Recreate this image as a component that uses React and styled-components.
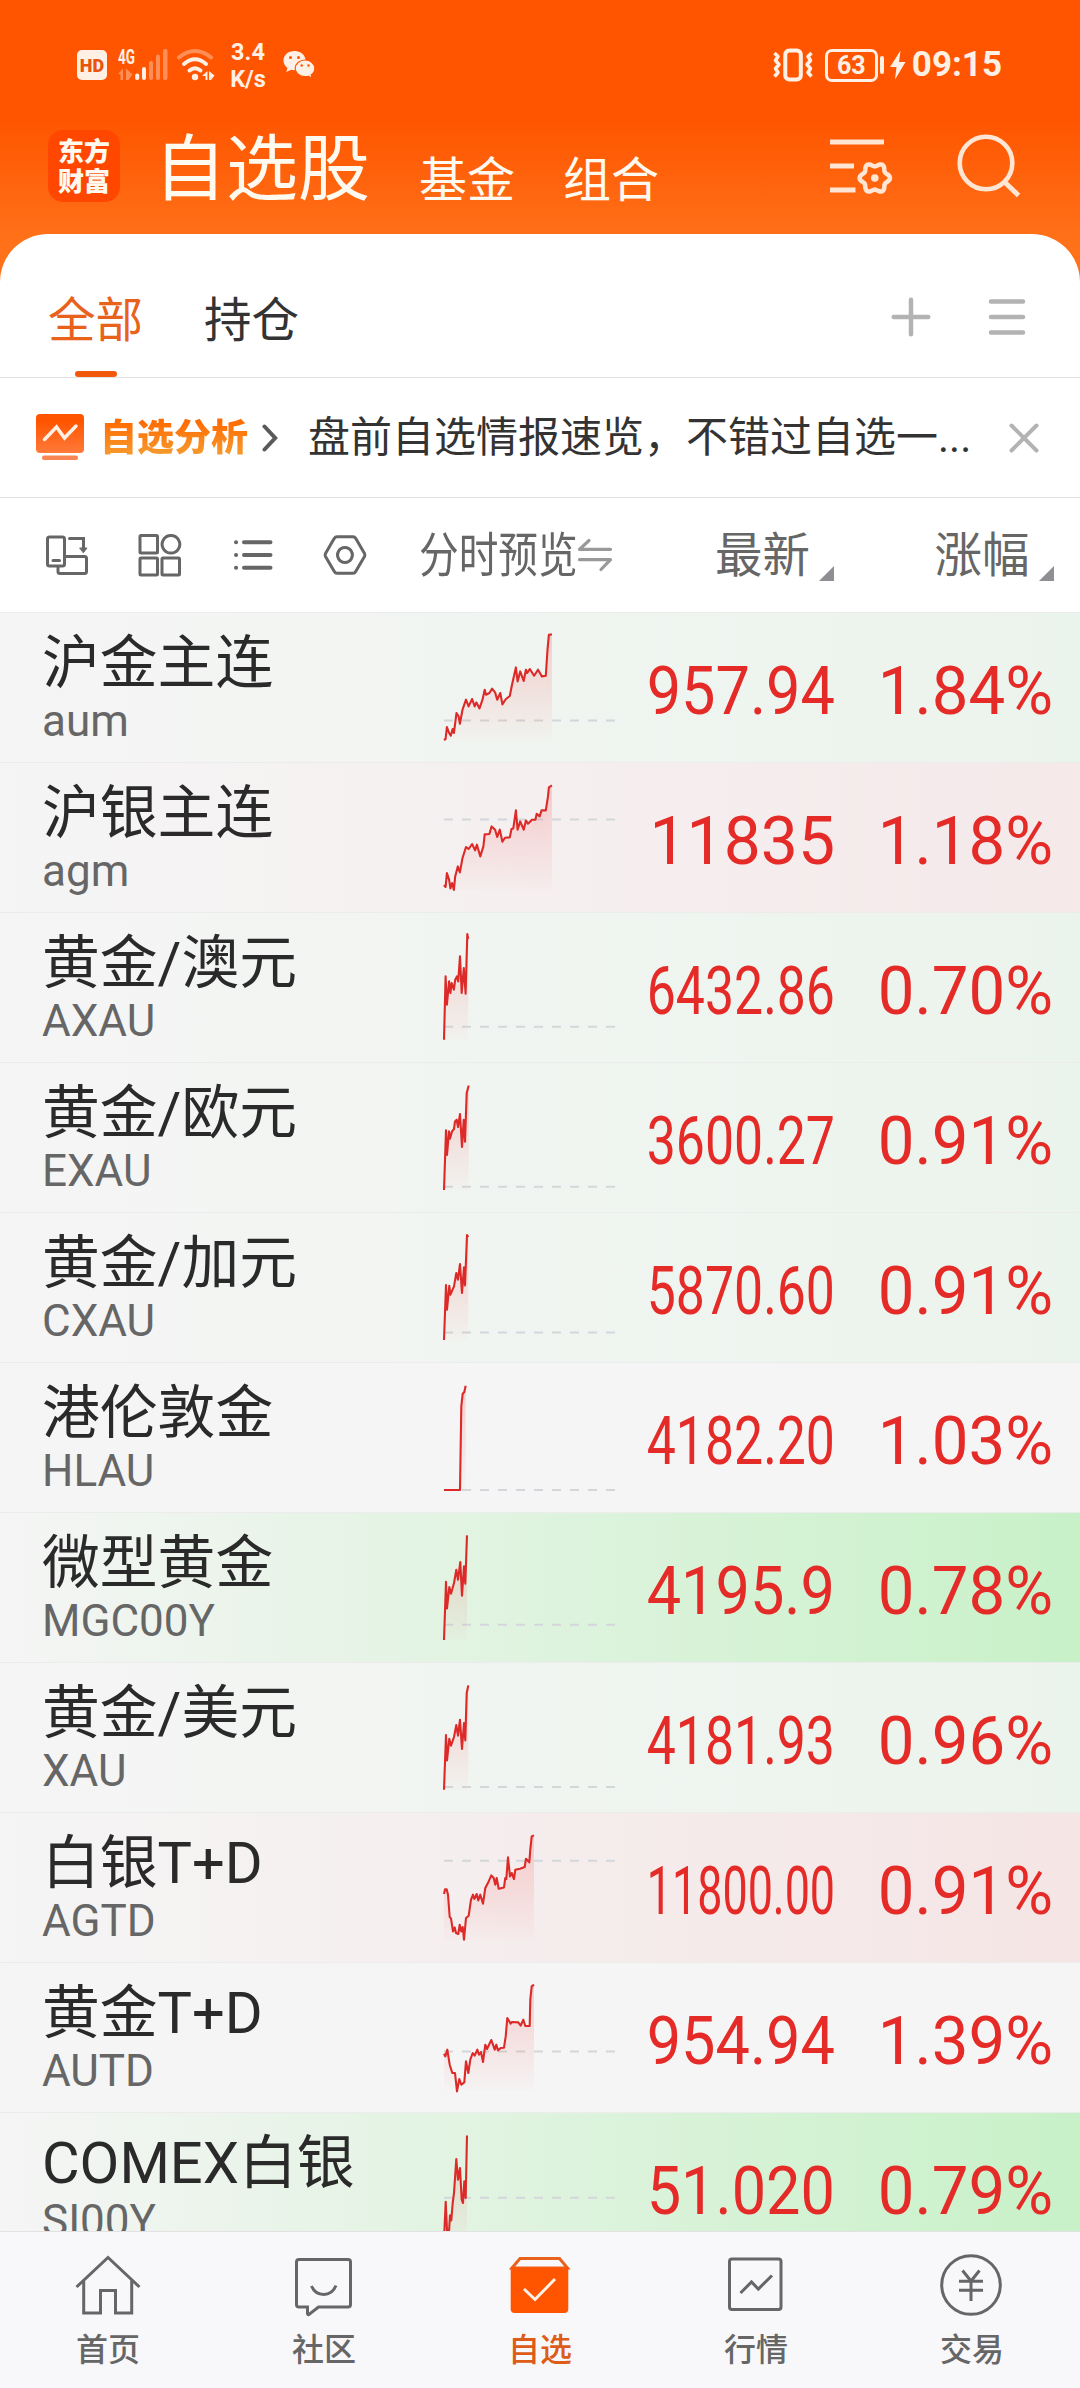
import React from "react";
import styled, { createGlobalStyle } from "styled-components";

const quotes = [
  {
    name: "沪金主连",
    code: "aum",
    price: "957.94",
    change: "1.84%",
    tint: "#ebf4ec",
    base: 108.4,
    line: "0,128 1.6,127 2.9,115 5.1,121 6.8,123.7 8.6,117 9.9,121 12.5,101 14.6,104.4 15.9,111.7 18.5,97.7 22,87.7 24.6,94.4 28.1,87 30.7,94.4 32.4,90.4 35.5,96.4 38.5,87.7 40.7,77.7 42,82.7 45.4,81 48,76.7 51.1,80.4 53.2,87.7 56.3,81 58.4,92.4 61.9,87 65.8,84 68,72.7 71.9,55.4 73.6,69.4 76.2,59.4 79.7,69 81.9,57.7 83.2,61 85.8,57 90.1,63.7 94,57.7 97.9,64.4 101.8,63.7 103.5,37.7 104.9,22.7 107.9,22.4",
  },
  {
    name: "沪银主连",
    code: "agm",
    price: "11835",
    change: "1.18%",
    tint: "#f5e9ea",
    base: 57.4,
    line: "0,123 1.6,125 2.9,111 5.1,117.7 6.4,126.4 8.1,121 9.9,128 11.2,114.4 13.8,104.4 15.9,110.4 18.5,96 22,85 24.6,87 28.1,82 31.1,88.4 32.9,82.7 36.3,94.4 39.4,84.4 40.7,72.4 45.4,72 47.6,64.4 51.1,67.7 53.2,75 55.8,67.7 58.4,79.7 61,75.7 65.8,75.4 67.5,67 69.3,66.4 71.9,48.4 73.6,67.7 76.2,59.4 79.7,67.7 81.9,58.4 84,61.7 87.9,57.7 91.4,57.7 92.7,51.7 95.7,54.4 97.5,48.4 101.8,48.4 104,34.4 104.9,25.4 107.9,23.4",
  },
  {
    name: "黄金/澳元",
    code: "AXAU",
    price: "6432.86",
    change: "0.70%",
    tint: "#ebf4ec",
    base: 114.7,
    line: "0,127.7 1.6,64.4 2.9,92.7 5.1,69.4 6.4,81 7.7,71 9.9,77.7 11.2,67.7 12.9,64.4 14.2,69.4 16,44.4 17.7,81 19.8,56 21.6,81.7 23.3,22 24.2,27",
  },
  {
    name: "黄金/欧元",
    code: "EXAU",
    price: "3600.27",
    change: "0.91%",
    tint: "#ebf4ec",
    base: 124.7,
    line: "0,128 2,68.4 3,93 5,69.4 6,76.7 8,69.4 10,67 11,59.4 12.7,57.7 14,65 16,52 18,85 19.7,57.7 21,79.7 22.7,31 24.7,23.4",
  },
  {
    name: "黄金/加元",
    code: "CXAU",
    price: "5870.60",
    change: "0.91%",
    tint: "#ebf4ec",
    base: 120.4,
    line: "0,128 2,73 3,97.7 5.3,73.7 6.3,82.7 10,74.4 12.3,61 14,67.7 16,52 18,81 20,55.4 21,73.4 23,23 24.3,25",
  },
  {
    name: "港伦敦金",
    code: "HLAU",
    price: "4182.20",
    change: "1.03%",
    tint: "#f5f5f5",
    base: 128,
    line: "0,128 16,128 17.3,44.4 18.7,31.7 20.3,30 21.7,23.7",
  },
  {
    name: "微型黄金",
    code: "MGC00Y",
    price: "4195.9",
    change: "0.78%",
    tint: "#c8f1c8",
    base: 112.7,
    line: "0,128 2,69.7 3,96.4 5.3,75 7,81.7 10,71 12.3,57.7 14,67.7 16.3,50 18,83.7 20,54.4 21.3,71.7 23,23.4",
  },
  {
    name: "黄金/美元",
    code: "XAU",
    price: "4181.93",
    change: "0.96%",
    tint: "#ebf4ec",
    base: 125,
    line: "0,127.7 2,73 3,98.4 5.3,76.7 7,83.7 10,75 12.3,63 14,73.7 16,57.7 18,87 20,61 21.3,78.4 22.7,31 24.3,23.4",
  },
  {
    name: "白银T+D",
    code: "AGTD",
    price: "11800.00",
    change: "0.91%",
    tint: "#f5e5e5",
    base: 48.7,
    line: "0,82 1,77.4 2.7,77.4 4,82.7 5.7,105 7,106.4 9,119.4 10.7,115.4 12,121 14.3,122 15.7,112.7 17.3,119.4 18.7,115 20,127.7 22,106 24.7,103.7 27,87.7 29,82.7 30.3,87 32.7,82 34.3,88.4 36.3,82.7 39,91.7 41.3,76 44.7,69.4 47.3,63.4 49.7,66 51.3,72.7 52.7,66 54.7,76.7 60,75.4 61.3,66 62.3,67 64,45.4 66,64.4 67.7,61 70,67 71.3,57.7 76,56.7 80.7,55 82,46.7 85.3,50.4 86.3,37.7 87.7,24.4 90,23.4",
  },
  {
    name: "黄金T+D",
    code: "AUTD",
    price: "954.94",
    change: "1.39%",
    tint: "#f5f5f5",
    base: 89.4,
    line: "0,91.7 1.3,94.4 3.3,87.7 5.7,102.7 8.3,111 11,111 13,129.4 15.3,117 17.3,122.7 20.3,120.4 22,99.4 24.3,111 26.3,97.7 28.7,91 30.7,93.7 33.3,87.7 35,92.7 37,90 39,100 41.3,82.7 43,87 47.3,78 49,82.7 50.7,87.7 52.3,82.7 54,88.4 56.7,86 60,85.7 61.7,74.4 63.3,56 66.7,61.7 68,60 74.3,60.4 76.7,63.7 79.3,57.7 81.3,64 85.7,64 86.3,37.7 87.7,24.4 90,22.7",
  },
  {
    name: "COMEX白银",
    code: "SI00Y",
    price: "51.020",
    change: "0.79%",
    tint: "#c8f1c8",
    base: 85.7,
    line: "0,128 1.7,89.7 3,118 4.7,125 6,103.4 7.3,108.4 8.7,91 10,81 12.3,47 14,67.7 16,56 17.7,87.7 19,91 20.3,69.4 21.7,86 23,23.4",
  },
];

// prices share one column width, longer ones get narrower glyphs
const squeezeOf = (price) => {
  const dots = price.split(".").length - 1;
  const natural = ((price.length - dots) * 0.5615 + dots * 0.263) * 66;
  return Math.min(1, 188 / natural);
};

const gearPath = () => {
  const points = [];
  for (let i = 0; i < 72; i++) {
    const a = (i / 72) * Math.PI * 2;
    const r = 13.4 + 1.8 * Math.cos(6 * a);
    points.push(
      `${(47.8 + r * Math.cos(a)).toFixed(2)},${(44 + r * Math.sin(a)).toFixed(2)}`
    );
  }
  return `M${points.join("L")}Z`;
};

const Signal = () => (
  <SignalSvg width="50" height="32" viewBox="0 0 50 32">
    <text
      x="0"
      y="14.5"
      fontFamily="Roboto, sans-serif"
      fontSize="19.5"
      fontWeight="700"
      textLength="17"
      lengthAdjust="spacingAndGlyphs"
      fill="#fff0e6"
    >
      4G
    </text>
    <g fill="#ff8f57">
      <path d="M0 25 5 19.5V31H2.500V25ZM8 19.5 14.5 25.5 10.500 31H8Z" />
      <rect x="31" y="12" width="4" height="19" rx="2" />
      <rect x="38" y="5.500" width="4" height="25.500" rx="2" />
      <rect x="45" y="0" width="4.500" height="31" rx="2" />
    </g>
    <g fill="#fff0e6">
      <rect x="17.200" y="24.500" width="4" height="6.500" rx="1.800" />
      <rect x="24" y="18" width="4" height="13" rx="2" />
    </g>
  </SignalSvg>
);

const Wifi = () => (
  <svg width="38" height="32" viewBox="0 0 38 32" fill="none" strokeLinecap="round" strokeWidth="4">
    <path d="M2 8.500Q18 -4.500 34 8.500" stroke="#ff8f57" />
    <path d="M7 15Q18 5.500 29 15M12.500 21.500Q18 17 23.500 21.500" stroke="#fff0e6" />
    <circle cx="18" cy="28" r="3.200" fill="#fff0e6" />
    <path d="M25 27 30.500 22V31H28.500V27ZM32 22 37.500 26.500 34 31H32Z" fill="#fff0e6" />
  </svg>
);

const Wechat = () => (
  <svg width="34" height="30" viewBox="0 0 34 30">
    <path
      d="M11.500 1C5 1 .500 5.200.500 10.500c0 3.200 1.600 5.700 4 7.500l-1.200 4 4.700-2.300c1.200.300 2.300.500 3.500.500 6.200 0 11-4.200 11-9.700S17.700 1 11.500 1Z"
      fill="#fff0e6"
    />
    <path
      d="M22 10c-5.500 0-9.800 3.700-9.800 8.400s4.300 8.300 9.800 8.300c1.200 0 2.300-.100 3.300-.500l3.800 2-.900-3.400c2.200-1.500 3.600-3.700 3.600-6.400 0-4.700-4.300-8.400-9.800-8.400Z"
      fill="#fff0e6"
      stroke="#ff5500"
      strokeWidth="1.200"
    />
    <g fill="#ff5500">
      <circle cx="7.500" cy="7.500" r="1.500" />
      <circle cx="15.500" cy="7.500" r="1.500" />
      <circle cx="18.700" cy="15.500" r="1.200" />
      <circle cx="25.500" cy="15.500" r="1.200" />
    </g>
  </svg>
);

const Vibrate = () => (
  <svg width="40" height="34" viewBox="0 0 40 34" fill="none" stroke="#fff0e6">
    <rect x="12.300" y="2.500" width="15.500" height="29" rx="4" strokeWidth="4" />
    <path
      d="M1.500 5 5 8.500 2.500 12.500 6 16.500 2.500 20.500 5 24.500 1.500 28.500M38.500 5 35 8.500 37.500 12.500 34 16.500 37.500 20.500 35 24.500 38.500 28.500"
      strokeWidth="3.500"
      strokeLinejoin="round"
    />
  </svg>
);

const Bolt = () => (
  <svg width="16" height="30" viewBox="0 0 16 30">
    <path d="M10.500.500 0 17H6.500L5 29.500 15.500 12H9Z" fill="#fff0e6" />
  </svg>
);

const FilterIcon = () => (
  <svg width="68" height="66" viewBox="0 0 68 66" fill="none" stroke="#ffe6d4" strokeWidth="5">
    <path d="M3 8H57M3 32H27M3 56H28.500" />
    <path d={gearPath()} strokeWidth="4.500" />
    <circle cx="47.800" cy="44" r="3.800" fill="#ffe6d4" stroke="none" />
  </svg>
);

const SearchIcon = () => (
  <svg width="68" height="68" viewBox="0 0 68 68" fill="none" stroke="#ffe6d4" strokeWidth="4.600">
    <circle cx="31" cy="33" r="26.300" />
    <path d="M49.500 52 63.500 65.500" strokeWidth="5" />
  </svg>
);

const PlusIcon = () => (
  <svg width="40" height="40" viewBox="0 0 40 40" stroke="#b3b3b3" strokeWidth="4.500" strokeLinecap="round">
    <path d="M2.700 20H37.300M20 2.700V37.300" />
  </svg>
);

const MenuIcon = () => (
  <svg width="40" height="40" viewBox="0 0 40 40" stroke="#b3b3b3" strokeWidth="4.500" strokeLinecap="round">
    <path d="M4 4.500H36M4 20H36M4 35.500H36" />
  </svg>
);

const AnalysisIcon = () => (
  <svg width="48" height="48" viewBox="0 0 48 48" fill="none">
    <defs>
      <linearGradient id="screen" x1="0" y1="0" x2="0" y2="1">
        <stop offset="0.200" stopColor="#ff5500" />
        <stop offset="1" stopColor="#ff7a3a" />
      </linearGradient>
    </defs>
    <rect width="48" height="39" rx="4" fill="url(#screen)" />
    <rect x="6" y="41.500" width="36" height="4.500" rx="2" fill="#f98552" />
    <path d="M8.500 25.500 20.500 13 28.500 24 40 12" stroke="#fff0e6" strokeWidth="3.500" strokeLinecap="round" />
  </svg>
);

const Chevron = () => (
  <svg width="16" height="28" viewBox="0 0 16 28" fill="none" stroke="#5a5a5a" strokeWidth="4" strokeLinecap="round">
    <path d="M2.500 2.500 13.200 14 2.500 25.500" />
  </svg>
);

const CloseIcon = () => (
  <svg width="32" height="32" viewBox="0 0 32 32" stroke="#b3b3b3" strokeWidth="4" strokeLinecap="round">
    <path d="M3.500 3.500 28.500 28.500M28.500 3.500 3.500 28.500" />
  </svg>
);

const toolIcons = [
  <g key="rotate">
    <path d="M4.500 4H17.500Q19.500 4 19.500 6V31Q19.500 33 17.500 33H4.500Q2.500 33 2.500 31V6Q2.500 4 4.500 4ZM8 27.500H14.500M24.500 5.500H38.500V15M20 23.500H39.500Q41.500 23.500 41.500 25.500V38.500Q41.500 40.500 39.500 40.500H15Q13 40.500 13 38.500V34" />
    <path d="M35 15H42L38.500 19.500Z" fill="#666" strokeWidth="1" />
  </g>,
  <path
    key="grid"
    d="M3 2.500H18.500Q19.500 2.500 19.500 3.500V19Q19.500 20 18.500 20H3Q2 20 2 19V3.500Q2 2.500 3 2.500ZM33 2.500A8.800 8.800 0 1 1 32.900 2.500ZM3 25H18.500Q19.500 25 19.500 26V41Q19.500 42 18.500 42H3Q2 42 2 41V26Q2 25 3 25ZM25 25H40.500Q41.500 25 41.500 26V41Q41.500 42 40.500 42H25Q24 42 24 41V26Q24 25 25 25Z"
  />,
  <path
    key="list"
    d="M5 9.300H5.100M13 9.300H39.500M5 22H5.100M13 22H39.500M5 34.700H5.100M13 34.700H39.500"
    strokeWidth="4"
  />,
  <path
    key="hexagon"
    d="M14 3.800H30Q31.700 3.800 32.700 5.300L41.500 20.500Q42.300 22 41.500 23.500L32.700 38.500Q31.700 40.300 30 40.300H14Q12.300 40.300 11.300 38.500L2.500 23.500Q1.700 22 2.500 20.500L11.300 5.300Q12.300 3.800 14 3.800ZM22 14.600A7.400 7.400 0 1 1 21.900 14.600Z"
  />,
];

const SwapIcon = () => (
  <svg width="36" height="34" viewBox="0 0 36 34" fill="none" stroke="#999" strokeWidth="3.200" strokeLinecap="round" strokeLinejoin="round">
    <path d="M33.500 11.300H2.500L12 2.500M2.500 21.700H33.500L24 31.500" />
  </svg>
);

const tabs = [
  {
    label: "首页",
    icon: (
      <path d="M4.500 35 36 5.500 67.500 35M11.700 28.500V61H28.500V38.500H43.500V61H59.700V28.500" />
    ),
  },
  {
    label: "社区",
    icon: (
      <path d="M11 7.500H60Q62.500 7.500 62.500 10V52.500Q62.500 55 60 55H30.500L21 62.500Q19.500 63 19.500 61.500V55H11Q8.500 55 8.500 52.500V10Q8.500 7.500 11 7.500ZM23.500 34Q27 42.500 35.700 42.500T48 33.500" />
    ),
  },
  {
    label: "自选",
    active: true,
    icon: (
      <>
        <path d="M8 16 16 6.500H55.500L63.500 16Z" stroke="#e8621c" />
        <path d="M6.700 15.500H64.300V57Q64.300 61 60.300 61H10.700Q6.700 61 6.700 57Z" fill="#ff5500" stroke="none" />
        <path d="M20 37 31 47.500 51 27" stroke="#fff0e6" />
      </>
    ),
  },
  {
    label: "行情",
    icon: (
      <path d="M12 7H58.500Q61 7 61 9.500V55Q61 57.500 58.500 57.500H12Q9.500 57.500 9.500 55V9.500Q9.500 7 12 7ZM20.500 41 31.500 30 38.300 37 52 23.500" />
    ),
  },
  {
    label: "交易",
    icon: (
      <>
        <circle cx="35" cy="33" r="29.300" />
        <path d="M26.500 18.500 35 29 43.500 18.500M35 29V49M23 29.300H47M23 38.300H47" />
      </>
    ),
  },
];

const Trend = ({ line, base }) => {
  const last = line.split(" ").pop().split(",")[0];
  return (
    <TrendSvg viewBox="0 0 172 150">
      <defs>
        <linearGradient id="trendFill" gradientUnits="userSpaceOnUse" x1="0" y1="22" x2="0" y2="128">
          <stop offset="0" stopColor="#f83030" stopOpacity="0.200" />
          <stop offset="1" stopColor="#f83030" stopOpacity="0.012" />
        </linearGradient>
      </defs>
      <path d={`M0 ${base}H172`} stroke="#d3d6da" strokeWidth="2" strokeDasharray="9 9" />
      <polygon points={`0,128 ${line} ${last},128`} fill="url(#trendFill)" />
      <polyline points={line} fill="none" stroke="#dc2a28" strokeWidth="2.100" strokeLinejoin="round" />
    </TrendSvg>
  );
};

const App = () => {
  return (
    <>
      <GlobalStyle />
      <Screen lang="zh-CN">
        <Header>
          <StatusBar>
            <HdBadge>HD</HdBadge>
            <Signal />
            <Wifi />
            <Speed>
              <span>3.4</span>
              <span>K/s</span>
            </Speed>
            <Wechat />
            <StatusRight>
              <Vibrate />
              <Battery>63</Battery>
              <BatteryNub />
              <Bolt />
              <Clock>09:15</Clock>
            </StatusRight>
          </StatusBar>
          <TitleBar>
            <Logo>
              <span>东方</span>
              <span>财富</span>
            </Logo>
            <Title>自选股</Title>
            <SubTitle>基金</SubTitle>
            <SubTitle>组合</SubTitle>
            <TitleActions>
              <FilterIcon />
              <SearchIcon />
            </TitleActions>
          </TitleBar>
        </Header>
        <Sheet>
          <GroupTabs>
            <GroupTab $active>全部</GroupTab>
            <GroupTab>持仓</GroupTab>
            <GroupActions>
              <PlusIcon />
              <MenuIcon />
            </GroupActions>
          </GroupTabs>
          <Notice>
            <AnalysisIcon />
            <NoticeTag>自选分析</NoticeTag>
            <Chevron />
            <NoticeText>盘前自选情报速览，不错过自选一...</NoticeText>
            <CloseIcon />
          </Notice>
          <ListHead>
            {toolIcons.map((icon) => (
              <ToolCell key={icon.key}>
                <svg width="44" height="44" viewBox="0 0 44 44" fill="none" stroke="#666" strokeWidth="3" strokeLinecap="round">
                  {icon}
                </svg>
              </ToolCell>
            ))}
            <PreviewHead>
              <span>分时预览</span>
              <SwapIcon />
            </PreviewHead>
            <SortHead $width={222}>最新</SortHead>
            <SortHead $width={220}>涨幅</SortHead>
          </ListHead>
        </Sheet>
        <QuoteList>
          {quotes.map((item) => (
            <QuoteRow key={item.code} $tint={item.tint}>
              <Names>
                <Name>{item.name}</Name>
                <Code>{item.code}</Code>
              </Names>
              <Trend line={item.line} base={item.base} />
              <Figure $squeeze={squeezeOf(item.price)}>{item.price}</Figure>
              <Figure $squeeze={0.99}>{item.change}</Figure>
            </QuoteRow>
          ))}
        </QuoteList>
        <BottomNav>
          {tabs.map((tab) => (
            <NavItem key={tab.label} $active={tab.active}>
              <svg width="72" height="66" viewBox="0 0 72 66" fill="none" stroke="#666" strokeWidth="3">
                {tab.icon}
              </svg>
              <span>{tab.label}</span>
            </NavItem>
          ))}
        </BottomNav>
      </Screen>
    </>
  );
};

const GlobalStyle = createGlobalStyle`
  * {
    box-sizing: border-box;
  }
  body {
    margin: 0;
    background: #fff;
    font-family: Roboto, "Noto Sans CJK SC", sans-serif;
  }
  svg {
    display: block;
    flex-shrink: 0;
  }
`;
const Screen = styled.div`
  width: 1080px;
  height: 2388px;
  display: flex;
  flex-direction: column;
  overflow: hidden;
  background: linear-gradient(#ff5500 118px, #ff7119 240px);
`;
const Header = styled.header`
  height: 234px;
  flex-shrink: 0;
  color: #fffaf0;
`;
const StatusBar = styled.div`
  height: 130px;
  display: flex;
  align-items: center;
  padding: 0 78px 0 77px;
  color: #fff0e6;
  > svg:nth-of-type(1) {
    margin-left: 11px;
  }
  > svg:nth-of-type(2) {
    margin-left: 9px;
  }
  > svg:nth-of-type(3) {
    margin-left: 17px;
  }
`;
const SignalSvg = styled.svg`
  overflow: visible;
`;
const HdBadge = styled.div`
  width: 30px;
  height: 30px;
  border-radius: 5px;
  background: #fff0e6;
  color: #e8540c;
  font-size: 18px;
  font-weight: 900;
  line-height: 31px;
  text-align: center;
`;
const Speed = styled.div`
  width: 36px;
  margin: 2px 0 0 15px;
  display: flex;
  flex-direction: column;
  align-items: center;
  font-size: 23.5px;
  font-weight: 700;
  line-height: 27px;
  white-space: nowrap;
`;
const StatusRight = styled.div`
  margin-left: auto;
  display: flex;
  align-items: center;
`;
const Battery = styled.div`
  width: 53px;
  height: 33px;
  margin-left: 12px;
  border: 3px solid #fff0e6;
  border-radius: 7px;
  font-size: 25px;
  font-weight: 700;
  line-height: 27px;
  text-align: center;
`;
const BatteryNub = styled.div`
  width: 4px;
  height: 18px;
  margin: 0 6px 0 2px;
  border-radius: 2px;
  background: #fff0e6;
`;
const Clock = styled.div`
  margin-left: 6px;
  font-size: 35px;
  font-weight: 700;
  line-height: 42px;
`;
const TitleBar = styled.div`
  display: flex;
  align-items: flex-start;
  padding: 0 57px 0 48px;
`;
const Logo = styled.div`
  width: 72px;
  height: 72px;
  padding-top: 5px;
  border-radius: 15px;
  background: #ff4700;
  font-family: "Noto Sans CJK SC", sans-serif;
  font-size: 26px;
  font-weight: 900;
  text-align: center;
  span {
    display: block;
    line-height: 30px;
  }
`;
const Title = styled.h1`
  margin: 4px 0 0 34px;
  font-size: 72px;
  font-weight: 400;
  line-height: 72px;
`;
const SubTitle = styled.div`
  margin: 15px 0 0 49px;
  font-size: 48px;
  line-height: 72px;
  & + & {
    margin-left: 48px;
  }
`;
const TitleActions = styled.div`
  margin: 0 0 0 auto;
  display: flex;
  gap: 60px;
  > svg:first-child {
    margin-top: 4px;
  }
`;
const Sheet = styled.section`
  flex-shrink: 0;
  border-radius: 48px 48px 0 0;
  background: #fff;
`;
const GroupTabs = styled.nav`
  height: 144px;
  display: flex;
  padding: 0 53px 0 48px;
  border-bottom: 1px solid #e3e3e3;
`;
const GroupTab = styled.div`
  width: 95px;
  margin-right: 61px;
  padding-top: 51px;
  display: flex;
  flex-direction: column;
  align-items: center;
  justify-content: space-between;
  font-size: 47.5px;
  line-height: 72px;
  color: ${(props) => (props.$active ? "#e8621c" : "#333")};
  white-space: nowrap;
  &::after {
    content: "";
    width: 42px;
    height: 6px;
    border-radius: 3px;
    background: ${(props) => (props.$active ? "#f2580c" : "transparent")};
  }
`;
const GroupActions = styled.div`
  margin: 63px 0 0 auto;
  display: flex;
  gap: 56px;
`;
const Notice = styled.div`
  height: 120px;
  display: flex;
  align-items: center;
  padding: 0 40px 0 36px;
  border-bottom: 1px solid #e3e3e3;
`;
const NoticeTag = styled.div`
  margin: -5px 14px 0 16px;
  font-family: "Noto Sans CJK SC", sans-serif;
  font-size: 37px;
  font-weight: 900;
  line-height: 48px;
  background: linear-gradient(#ff6a00 20%, #f7962a 85%);
  -webkit-background-clip: text;
  -webkit-text-fill-color: transparent;
`;
const NoticeText = styled.div`
  flex: 1;
  margin: 1px 0 0 30px;
  font-size: 42px;
  line-height: 60px;
  color: #333;
  white-space: nowrap;
`;
const ListHead = styled.div`
  height: 114px;
  display: flex;
  align-items: center;
  padding-left: 21px;
  color: #666;
`;
const ToolCell = styled.div`
  width: 93px;
  display: flex;
  justify-content: center;
`;
const PreviewHead = styled.div`
  width: 221px;
  margin-left: 27px;
  display: flex;
  align-items: center;
  > span {
    width: 158px;
    padding-top: 2px;
    font-size: 47.5px;
    line-height: 72px;
    white-space: nowrap;
    transform: scaleX(0.835);
    transform-origin: left;
  }
`;
const SortHead = styled.div`
  width: ${(props) => props.$width}px;
  display: flex;
  align-items: center;
  padding: 2px 0 0 76px;
  font-size: 47.5px;
  line-height: 72px;
  white-space: nowrap;
  &:last-child {
    padding-left: 74px;
  }
  &::after {
    content: "";
    flex-shrink: 0;
    margin: 34px 0 0 9px;
    border-left: 15px solid transparent;
    border-bottom: 15px solid #8e8e93;
  }
`;
const QuoteList = styled.main`
  flex: 1;
  min-height: 0;
  overflow: hidden;
  background: #f5f5f5;
`;
const QuoteRow = styled.div`
  height: 150px;
  display: grid;
  grid-template-columns: 402px 172px 219px 218px;
  padding-left: 42px;
  background: linear-gradient(90deg, #f5f5f5, ${(props) => props.$tint});
  box-shadow: inset 0 1px #ececec;
`;
const Names = styled.div`
  padding-top: 15px;
  white-space: nowrap;
`;
const Name = styled.div`
  font-size: 57.8px;
  line-height: 72px;
  color: #2a2a2a;
`;
const Code = styled.div`
  margin-top: -2px;
  font-size: 44px;
  line-height: 48px;
  color: #666;
`;
const TrendSvg = styled.svg`
  width: 172px;
  height: 150px;
  overflow: visible;
`;
const Figure = styled.div`
  justify-self: end;
  font-size: 66px;
  line-height: 160px;
  color: #e52b28;
  white-space: nowrap;
  transform: scaleX(${(props) => props.$squeeze});
  transform-origin: right;
`;
const BottomNav = styled.nav`
  height: 157px;
  flex-shrink: 0;
  display: grid;
  grid-template-columns: repeat(5, 1fr);
  border-top: 1px solid #e2e2e2;
  background: #f8f8fb;
`;
const NavItem = styled.div`
  padding-top: 20px;
  display: flex;
  flex-direction: column;
  align-items: center;
  font-size: 32px;
  font-weight: 500;
  line-height: 40px;
  color: ${(props) => (props.$active ? "#dc5c18" : "#666")};
  > span {
    margin-top: 12px;
  }
`;

export default App;
